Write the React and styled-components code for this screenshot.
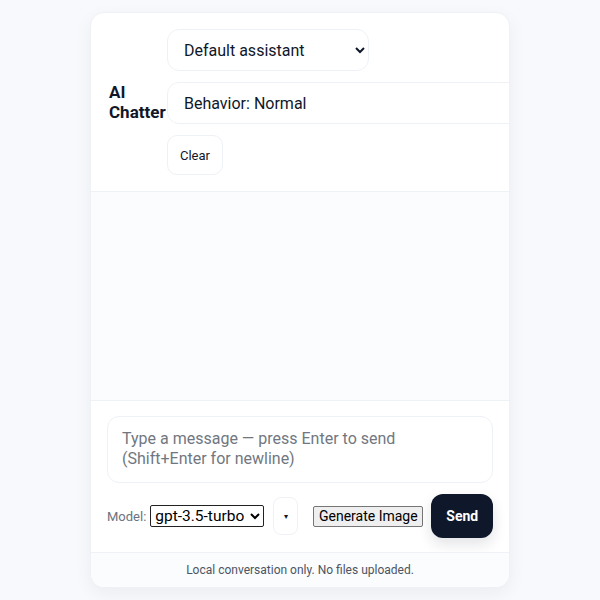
import React, { useState } from "react";
import styled, { createGlobalStyle } from "styled-components";

const GlobalStyle = createGlobalStyle`
  html, body {
    margin: 0;
    padding: 0;
    background: #f7f9fc;
    font-family: Roboto, "Liberation Sans", sans-serif;
    color: #0f172a;
  }
  * { box-sizing: border-box; }
`;

const App = () => {
  const [text, setText] = useState("");
  return (
    <>
      <GlobalStyle />
      <Page>
        <Card>
          <Header>
            <Title>AI Chatter</Title>
            <Controls>
              <PersonaSelect defaultValue="default">
                <option value="default">Default assistant</option>
              </PersonaSelect>
              <BehaviorInput readOnly value="Behavior: Normal" />
              <ClearButton>Clear</ClearButton>
            </Controls>
          </Header>
          <Messages />
          <Composer>
            <MessageBox
              value={text}
              onChange={(e) => setText(e.target.value)}
              placeholder={"Type a message \u2014 press Enter to send (Shift+Enter for newline)"}
            />
            <ActionRow>
              <ModelLabel>
                Model:
                <ModelSelect defaultValue="gpt-3.5-turbo">
                  <option>gpt-3.5-turbo</option>
                </ModelSelect>
              </ModelLabel>
              <MoreButton>▾</MoreButton>
              <GenerateButton>Generate Image</GenerateButton>
              <SendButton>Send</SendButton>
            </ActionRow>
          </Composer>
          <Footer>Local conversation only. No files uploaded.</Footer>
        </Card>
      </Page>
    </>
  );
};

export default App;

const Page = styled.div`
  height: 600px;
  padding: 12px 0;
  display: flex;
  justify-content: center;
`;

const Card = styled.div`
  width: 420px;
  height: 576px;
  background: #ffffff;
  border: 1px solid #eef1f5;
  border-radius: 14px;
  box-shadow: 0 6px 18px rgba(15, 23, 42, 0.05);
  overflow: hidden;
  display: flex;
  flex-direction: column;
`;

const Header = styled.div`
  display: flex;
  align-items: center;
  padding: 16px 0 16px 18px;
  border-bottom: 1px solid #eef1f5;
`;

const Title = styled.h1`
  margin: 0;
  font-size: 17px;
  line-height: 20px;
  font-weight: 700;
  width: 58px;
  flex-shrink: 0;
`;

const Controls = styled.div`
  display: flex;
  flex-direction: column;
  align-items: flex-start;
  gap: 11px;
`;

const PersonaSelect = styled.select`
  width: 202px;
  height: 42px;
  padding: 0 8px 0 12px;
  border: 1px solid #eef1f5;
  border-radius: 12px;
  background: #ffffff;
  font-family: Roboto, "Liberation Sans", sans-serif;
  font-size: 16px;
  color: #0f172a;
`;

const BehaviorInput = styled.input`
  width: 420px;
  height: 42px;
  padding: 0 16px;
  border: 1px solid #eef1f5;
  border-radius: 12px;
  background: #ffffff;
  font-family: Roboto, "Liberation Sans", sans-serif;
  font-size: 16px;
  color: #0f172a;
  outline: none;
`;

const ClearButton = styled.button`
  height: 40px;
  padding: 0 12px;
  border: 1px solid #eef1f5;
  border-radius: 10px;
  background: #ffffff;
  font-family: Roboto, "Liberation Sans", sans-serif;
  font-size: 13px;
  color: #0f172a;
`;

const Messages = styled.div`
  flex: 1;
  background: #fbfcfe;
  border-bottom: 1px solid #eef1f5;
`;

const Composer = styled.div`
  padding: 15px 16px 14px;
  display: flex;
  flex-direction: column;
  gap: 11px;
`;

const MessageBox = styled.textarea`
  width: 100%;
  height: 67px;
  resize: none;
  padding: 12px 14px 11px;
  border: 1px solid #eef1f5;
  border-radius: 12px;
  font-family: Roboto, "Liberation Sans", sans-serif;
  font-size: 16px;
  line-height: 20px;
  color: #0f172a;
  outline: none;
  &::placeholder {
    color: #71777f;
  }
`;

const ActionRow = styled.div`
  display: flex;
  align-items: center;
  gap: 8px;
`;

const ModelLabel = styled.label`
  flex-shrink: 0;
  display: flex;
  align-items: center;
  gap: 4px;
  font-size: 13px;
  color: #6b7280;
`;

const ModelSelect = styled.select`
  width: 114px;
  height: 22px;
  font-family: Roboto, "Liberation Sans", sans-serif;
  font-size: 15.5px;
  color: #000;
  border: 1px solid #222;
  border-radius: 2px;
  background: #fff;
  padding: 0;
`;

const MoreButton = styled.button`
  flex-shrink: 0;
  width: 25px;
  height: 38px;
  margin-left: 1px;
  padding: 0;
  border: 1px solid #eef1f5;
  border-radius: 8px;
  background: #ffffff;
  font-size: 8px;
  color: #0f172a;
`;

const GenerateButton = styled.button`
  flex-shrink: 0;
  white-space: nowrap;
  width: 110px;
  height: 21px;
  margin-left: 7px;
  padding: 0;
  border: 1px solid #767676;
  border-radius: 2px;
  background: #efefef;
  font-family: Roboto, "Liberation Sans", sans-serif;
  font-size: 14px;
  color: #000;
`;

const SendButton = styled.button`
  flex-shrink: 0;
  height: 44px;
  width: 62px;
  border: none;
  border-radius: 12px;
  background: #0f172a;
  color: #ffffff;
  font-family: Roboto, "Liberation Sans", sans-serif;
  font-size: 14px;
  font-weight: 700;
  box-shadow: 0 6px 14px rgba(15, 23, 42, 0.12);
`;

const Footer = styled.div`
  margin-top: auto;
  border-top: 1px solid #eef1f5;
  background: #fbfcfe;
  height: 35px;
  display: flex;
  align-items: center;
  justify-content: center;
  font-size: 12px;
  color: #4b5563;
`;
